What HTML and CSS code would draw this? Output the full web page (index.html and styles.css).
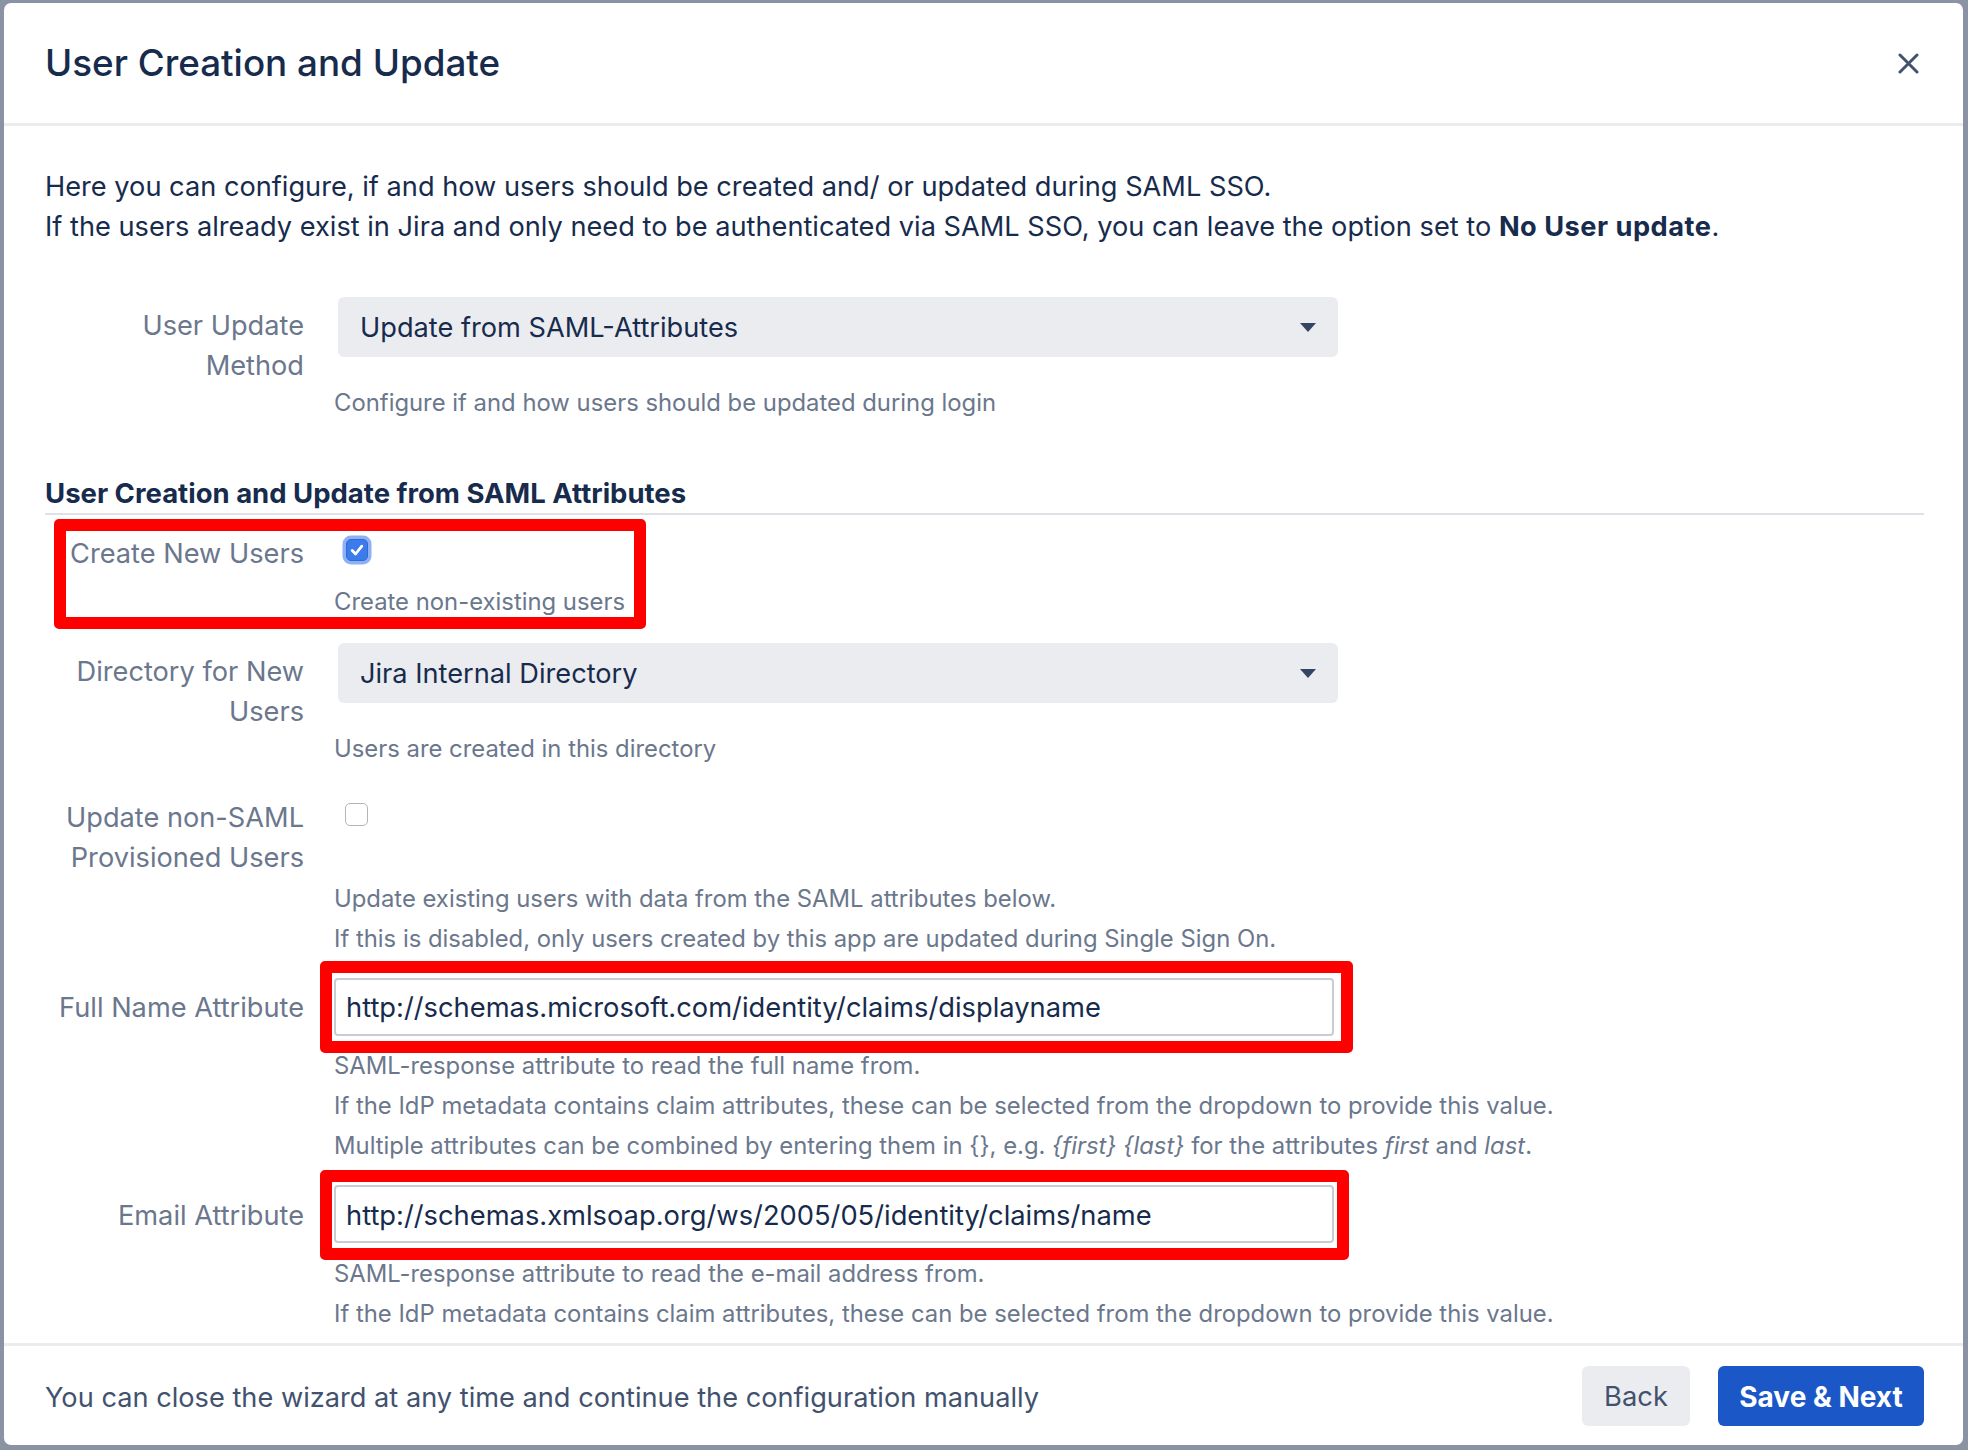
FILE: index.html
```html
<!DOCTYPE html>
<html lang="en">
<head>
<meta charset="utf-8">
<title>User Creation and Update</title>
<link rel="stylesheet" href="styles.css">
</head>
<body>
<div class="modal">
  <header class="modal-header">
    <h2 class="modal-title">User Creation and Update</h2>
    <button class="close-btn" aria-label="Close">
      <svg width="21" height="21" viewBox="0 0 21 21"><path d="M2 2 L19 19 M19 2 L2 19" stroke="#42526e" stroke-width="3" stroke-linecap="round" fill="none"/></svg>
    </button>
  </header>

  <div class="modal-body">
    <p class="intro">Here you can configure, if and how users should be created and/ or updated during SAML SSO.<br>If the users already exist in Jira and only need to be authenticated via SAML SSO, you can leave the option set to <strong>No User update</strong>.</p>

    <div class="field-group g-method">
      <div class="field-label pad-select">User Update<br>Method</div>
      <div class="field">
        <div class="select"><span>Update from SAML-Attributes</span><span class="select-arrow"></span></div>
        <p class="desc after-select">Configure if and how users should be updated during login</p>
      </div>
    </div>

    <h3 class="section-heading">User Creation and Update from SAML Attributes</h3>

    <div class="field-group g-create">
      <div class="field-label">Create New Users</div>
      <div class="field">
        <div class="check-row"><span class="checkbox checked"><svg width="22" height="22" viewBox="0 0 22 22"><path d="M6.2 11.6 L9.6 15 L15.8 7.2" stroke="#fff" stroke-width="2.8" stroke-linecap="round" stroke-linejoin="round" fill="none"/></svg></span></div>
        <p class="desc after-check">Create non-existing users</p>
      </div>
      <div class="highlight hl-create"></div>
    </div>

    <div class="field-group g-dir">
      <div class="field-label pad-select">Directory for New<br>Users</div>
      <div class="field">
        <div class="select"><span>Jira Internal Directory</span><span class="select-arrow"></span></div>
        <p class="desc after-select">Users are created in this directory</p>
      </div>
    </div>

    <div class="field-group g-nonsaml">
      <div class="field-label">Update non-SAML<br>Provisioned Users</div>
      <div class="field">
        <div class="check-row"><span class="checkbox"></span></div>
        <p class="desc after-check-long">Update existing users with data from the SAML attributes below.</p>
        <p class="desc">If this is disabled, only users created by this app are updated during Single Sign On.</p>
      </div>
    </div>

    <div class="field-group g-fullname">
      <div class="field-label pad-input">Full Name Attribute</div>
      <div class="field">
        <input class="text-input" type="text" value="http://schemas.microsoft.com/identity/claims/displayname">
        <p class="desc after-input">SAML-response attribute to read the full name from.</p>
        <p class="desc">If the IdP metadata contains claim attributes, these can be selected from the dropdown to provide this value.</p>
        <p class="desc">Multiple attributes can be combined by entering them in {}, e.g. <em>{first} {last}</em> for the attributes <em>first</em> and <em>last</em>.</p>
      </div>
      <div class="highlight hl-fullname"></div>
    </div>

    <div class="field-group g-email">
      <div class="field-label pad-input2">Email Attribute</div>
      <div class="field">
        <input class="text-input" type="text" value="http://schemas.xmlsoap.org/ws/2005/05/identity/claims/name">
        <p class="desc after-input2">SAML-response attribute to read the e-mail address from.</p>
        <p class="desc">If the IdP metadata contains claim attributes, these can be selected from the dropdown to provide this value.</p>
      </div>
      <div class="highlight hl-email"></div>
    </div>
  </div>

  <footer class="modal-footer">
    <span class="footer-hint">You can close the wizard at any time and continue the configuration manually</span>
    <div class="footer-actions">
      <button class="btn btn-back">Back</button>
      <button class="btn btn-primary">Save &amp; Next</button>
    </div>
  </footer>
</div>
</body>
</html>
```

FILE: styles.css
```css
* { box-sizing: border-box; }

html, body {
  margin: 0;
}

body {
  width: 1968px;
  height: 1450px;
  overflow: hidden;
  padding: 3px 5px 5px 4px;
  background: #8a93a3;
  font-family: Inter, "Noto Sans", sans-serif;
  color: #172b4d;
}

.modal {
  height: 1442px;
  background: #fff;
  border-radius: 7px;
  display: flex;
  flex-direction: column;
  overflow: hidden;
}

/* header */
.modal-header {
  flex: none;
  height: 123px;
  display: flex;
  align-items: center;
  justify-content: space-between;
  padding: 0 44px 0 41px;
  border-bottom: 3px solid #ebecf0;
}

.modal-title {
  margin: 0;
  font-size: 36.8px;
  font-weight: 500;
  line-height: 1.2;
  color: #172b4d;
}

.close-btn {
  width: 21px;
  height: 21px;
  padding: 0;
  border: 0;
  background: none;
  display: flex;
}

/* body */
.modal-body {
  flex: 1;
  overflow: hidden;
  padding: 41px 39px 0 41px;
  font-size: 27.2px;
  line-height: 40px;
}

.intro { margin: 0; }
.intro strong { font-weight: 700; letter-spacing: 0.5px; }

.field-group {
  position: relative;
  display: grid;
  grid-template-columns: 259px 1fr;
  column-gap: 30px;
  align-items: start;
}

.field-label {
  text-align: right;
  color: #6b778c;
  line-height: 40px;
  padding-top: 2px;
}
.pad-select { padding-top: 9px; }
.pad-input { padding-top: 10px; }
.pad-input2 { padding-top: 11px; }

.field {
  display: flex;
  flex-direction: column;
  align-items: flex-start;
}

.desc {
  margin: 0;
  font-size: 23.85px;
  line-height: 40px;
  color: #6b778c;
  white-space: nowrap;
}
.after-select { margin-top: 26px; }
.after-check { margin-top: 10px; }
.after-check-long { margin-top: 42.5px; }
.after-input { margin-top: 10.5px; }
.after-input2 { margin-top: 11px; }
.field .desc + .desc { margin-top: 0; }

.select {
  margin-left: 4px;
  width: 1000px;
  height: 60px;
  border-radius: 6px;
  background: #ebecf0;
  display: flex;
  align-items: center;
  justify-content: space-between;
  padding: 2px 22px 0;
  color: #172b4d;
}

.select-arrow {
  width: 0;
  height: 0;
  margin-top: -2px;
  border-left: 8px solid transparent;
  border-right: 8px solid transparent;
  border-top: 9px solid #344563;
}

.text-input {
  display: block;
  width: 1000px;
  height: 58px;
  margin: 0;
  border: 2px solid #c7ccd5;
  border-radius: 4px;
  padding: 2px 10px 0;
  background: #fff;
  font-family: inherit;
  font-size: 27.3px;
  color: #172b4d;
  outline: none;
}

.check-row {
  height: 40px;
  display: flex;
  align-items: flex-start;
}

.checkbox {
  display: block;
  width: 23px;
  height: 23px;
  margin: 6.5px 0 0 11px;
  border: 1.5px solid #b3b5b9;
  border-radius: 5px;
  background: #fff;
}

.checkbox.checked {
  width: 22px;
  height: 22px;
  margin: 6.5px 0 0 12px;
  border: 1px solid #2f69d6;
  background: #3b7bea;
  box-shadow: 0 0 0 3.5px #8db1f3;
}
.checkbox.checked svg { display: block; margin: -1px; }

.section-heading {
  margin: 48px 0 0;
  padding-top: 2px;
  font-size: 27.5px;
  font-weight: 700;
  line-height: 40px;
  color: #172b4d;
  border-bottom: 2px solid #dfe1e6;
}

.g-method { margin-top: 50px; }
.g-create { margin-top: 17px; }
.g-dir { margin-top: 21px; }
.g-nonsaml { margin-top: 27px; }
.g-fullname { margin-top: 19px; }
.g-email { margin-top: 19px; }

/* red annotation boxes lying over the form */
.highlight {
  position: absolute;
  border: 12px solid #ff0000;
  border-radius: 5px;
  pointer-events: none;
}
.hl-create { top: -13px; left: 9px; width: 592px; height: 110px; }
.hl-fullname { top: -17px; left: 275px; width: 1033px; height: 92px; }
.hl-email { top: -15px; left: 275px; width: 1029px; height: 90px; }

/* footer */
.modal-footer {
  flex: none;
  height: 102px;
  border-top: 3px solid #ebecf0;
  display: flex;
  align-items: center;
  justify-content: space-between;
  padding: 0 39px 0 41px;
}

.footer-hint {
  padding-top: 3px;
  font-size: 27.2px;
  color: #42526e;
}

.footer-actions {
  display: flex;
  gap: 28px;
}

.btn {
  height: 60px;
  padding: 2px 0 0;
  border: 0;
  border-radius: 6px;
  font-family: inherit;
  font-size: 27.3px;
}

.btn-back {
  width: 108px;
  background: #ebecf0;
  color: #42526e;
}

.btn-primary {
  width: 206px;
  background: #1b57c7;
  color: #fff;
  font-size: 28px;
  font-weight: 700;
}
```
